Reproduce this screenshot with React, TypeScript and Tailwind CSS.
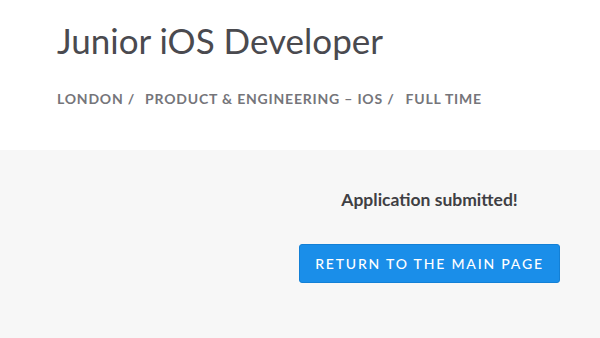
export default function App() {
  return (
    <div className="min-h-[338px] w-[600px] bg-[#f7f7f7] font-['Lato',sans-serif]">
      {/* Header */}
      <div className="h-[150px] bg-white pl-[57px] pt-[18px]">
        <h1 className="text-[35px] leading-[44px] font-normal text-[#4a4a4f]">
          Junior iOS Developer
        </h1>
        <div className="mt-[26px] flex text-[14px] font-bold uppercase tracking-[0.8px] text-[#75757a]">
          <span>London /</span>
          <span className="ml-[10px]">Product &amp; Engineering – iOS /</span>
          <span className="ml-[11px]">Full time</span>
        </div>
      </div>

      {/* Confirmation */}
      <div className="flex justify-end pr-[40px] pt-[37px]">
        <div className="flex w-[261px] flex-col items-center">
          <p className="text-[17.5px] font-bold text-[#3f3f44]">Application submitted!</p>
          <button className="mt-[31px] h-[39px] w-[261px] rounded-[3px] border border-[#1380d6] bg-[#1a8ee9] text-[14px] font-medium uppercase tracking-[1.8px] text-white">
            Return to the main page
          </button>
        </div>
      </div>
    </div>
  );
}
